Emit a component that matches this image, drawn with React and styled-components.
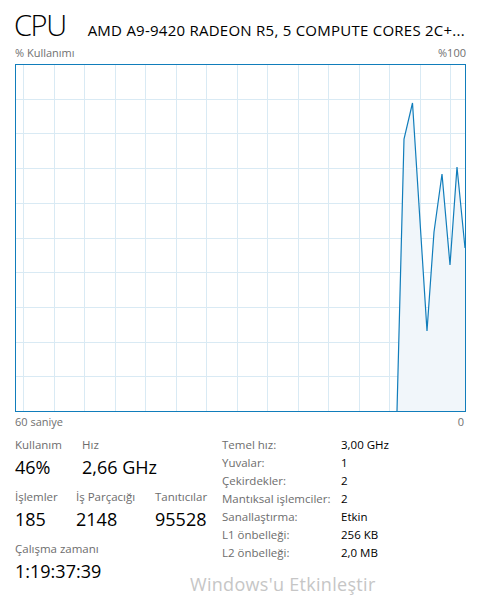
import React from 'react';
import styled, { createGlobalStyle } from 'styled-components';

const GlobalStyle = createGlobalStyle`
    body {
        margin:0;
        background:#fff;
        font-family:"Open Sans", "Noto Sans", sans-serif;
        color:#000;
    }
`

const Page = styled.div`
    position:relative;
    width:487px;
    height:598px;
    padding:0 0 0 15px;
    box-sizing:border-box;
    overflow:hidden;
`
const Header = styled.div`
    display:flex;
    align-items:baseline;
    width:451px;
    height:44px;
    white-space:nowrap;
`
const Title = styled.h1`
    margin:0 0 0 -1px;
    font-size:29px;
    font-weight:350;
    letter-spacing:-1.4px;
    line-height:50px;
`
const Model = styled.span`
    margin-left:22px;
    font-size:15px;
    letter-spacing:0.25px;
`
const AxisRow = styled.div`
    display:flex;
    justify-content:space-between;
    width:451px;
    font-size:11px;
    line-height:${p => p.h}px;
    margin-bottom:${p => p.mb || 0}px;
    color:#707070;
`
const Chart = styled.div`
    width:449px;
    height:346px;
    border:1px solid #117dbb;
`
const Stats = styled.div`
    display:flex;
    margin-top:5px;
`
const LeftStats = styled.div`
    width:207px;
`
const StatRow = styled.div`
    display:flex;
    margin-bottom:${p => p.gap || 0}px;
`
const Stat = styled.div`
    width:${p => p.w}px;
`
const Label = styled.div`
    font-size:11.5px;
    line-height:16px;
    color:#6d6d6d;
    white-space:nowrap;
`
const Value = styled.div`
    font-size:18px;
    line-height:28px;
    color:#000;
    white-space:nowrap;
`
const Specs = styled.div`
    display:grid;
    grid-template-columns:119px auto;
    grid-auto-rows:18px;
    font-size:11.5px;
    line-height:18px;
    margin-top:-1px;
`
const SpecLabel = styled.span`
    color:#6d6d6d;
    white-space:nowrap;
`
const SpecValue = styled.span`
    color:#000;
`
const Watermark = styled.div`
    position:absolute;
    left:190px;
    top:572px;
    font-size:18px;
    letter-spacing:0.3px;
    color:#c6c6c6;
    white-space:nowrap;
`

const points = [
    [381, 346], [388, 74], [396.5, 38], [411, 266], [418, 167],
    [426, 109], [434, 200], [441, 102], [449, 183],
];

const CpuGraph = () => {
    const vLines = Array.from({ length: 15 }, (_, i) => Math.round(7 + i * 30.5) + 0.5);
    const hLines = Array.from({ length: 9 }, (_, i) => Math.round((i + 1) * 34.7 - 1) + 0.5);
    const line = points.map(p => p.join(',')).join(' ');
    const area = `${line} 449,346 381,346`;
    return (
        <svg width="449" height="346" style={{ display: 'block' }}>
            {vLines.map(x => (
                <line key={'v' + x} x1={x} y1="0" x2={x} y2="346" stroke="#d9eaf4" strokeWidth="1" />
            ))}
            {hLines.map(y => (
                <line key={'h' + y} x1="0" y1={y} x2="449" y2={y} stroke="#d9eaf4" strokeWidth="1" />
            ))}
            <polygon points={area} fill="#f1f6fa" />
            <polyline points={line} fill="none" stroke="#117dbb" strokeWidth="1.2" />
        </svg>
    );
};

const specs = [
    ['Temel hız:', '3,00 GHz'],
    ['Yuvalar:', '1'],
    ['Çekirdekler:', '2'],
    ['Mantıksal işlemciler:', '2'],
    ['Sanallaştırma:', 'Etkin'],
    ['L1 önbelleği:', '256 KB'],
    ['L2 önbelleği:', '2,0 MB'],
];

const App = () => {
    return (
        <Page>
            <GlobalStyle />
            <Header>
                <Title>CPU</Title>
                <Model>AMD A9-9420 RADEON R5, 5 COMPUTE CORES 2C+...</Model>
            </Header>
            <AxisRow h={18} mb={2}>
                <span>% Kullanımı</span>
                <span>%100</span>
            </AxisRow>
            <Chart>
                <CpuGraph />
            </Chart>
            <AxisRow h={20}>
                <span>60 saniye</span>
                <span style={{ marginRight: 2 }}>0</span>
            </AxisRow>
            <Stats>
                <LeftStats>
                    <StatRow gap={8}>
                        <Stat w={67}>
                            <Label>Kullanım</Label>
                            <Value>46%</Value>
                        </Stat>
                        <Stat w={120}>
                            <Label>Hız</Label>
                            <Value>2,66 GHz</Value>
                        </Stat>
                    </StatRow>
                    <StatRow gap={8}>
                        <Stat w={61}>
                            <Label>İşlemler</Label>
                            <Value>185</Value>
                        </Stat>
                        <Stat w={79}>
                            <Label>İş Parçacığı</Label>
                            <Value>2148</Value>
                        </Stat>
                        <Stat w={60}>
                            <Label>Tanıtıcılar</Label>
                            <Value>95528</Value>
                        </Stat>
                    </StatRow>
                    <StatRow>
                        <Stat w={150}>
                            <Label>Çalışma zamanı</Label>
                            <Value>1:19:37:39</Value>
                        </Stat>
                    </StatRow>
                </LeftStats>
                <Specs>
                    {specs.map(([k, v]) => (
                        <React.Fragment key={k}>
                            <SpecLabel>{k}</SpecLabel>
                            <SpecValue>{v}</SpecValue>
                        </React.Fragment>
                    ))}
                </Specs>
            </Stats>
            <Watermark>Windows'u Etkinleştir</Watermark>
        </Page>
    );
};

export default App;
